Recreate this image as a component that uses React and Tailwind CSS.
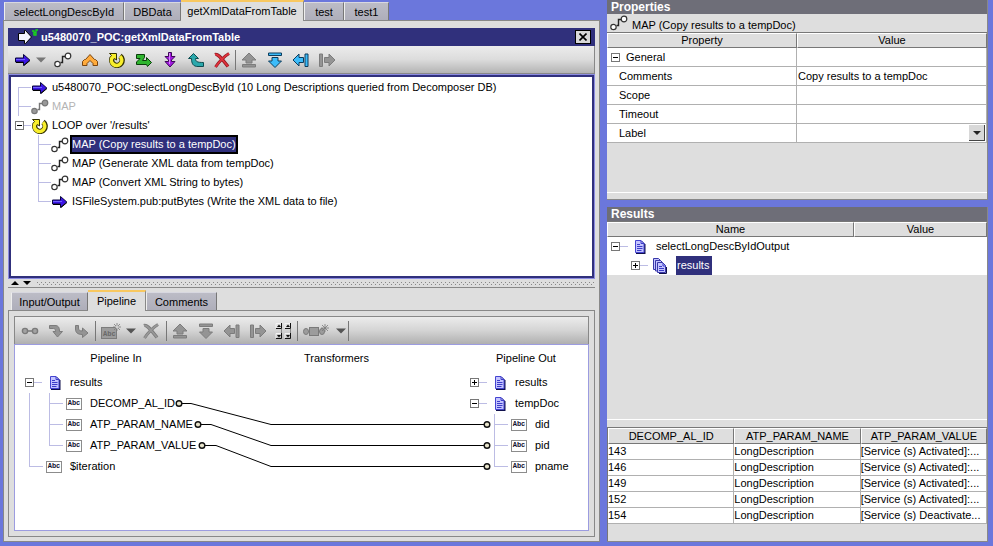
import React from "react";

const FLOW = "#bcbce4";

/* ---------- icons ---------- */

const Svg = ({ w = 18, h = 16, children, label }) => (
  <svg width={w} height={h} viewBox={`0 0 ${w} ${h}`} className="block shrink-0" aria-hidden={label ? undefined : true}>
    {children}
  </svg>
);

const InvokeIcon = () => (
  <Svg>
    <path d="M1.5 6H9.5V2.5L15.8 8L9.5 13.5V10H1.5Z" fill="#3c14e6" stroke="#08063c" />
    <path d="M2 7.5H11" stroke="#7060ff" />
    <path d="M2 10.5H9M10 13.5L16 8.5" stroke="#000" />
  </Svg>
);

const MapIcon = ({ off = false }) => (
  <Svg>
    <path d="M6.5 10.5H8.5V4.5H11" fill="none" stroke={off ? "#777" : "#222"} strokeWidth="1.4" />
    <circle cx="3.5" cy="12" r="2.7" fill={off ? "#999" : "#fff"} stroke={off ? "#777" : "#333"} strokeWidth="1.2" />
    <circle cx="14" cy="4" r="2.8" fill={off ? "#999" : "#fff"} stroke={off ? "#777" : "#333"} strokeWidth="1.2" />
  </Svg>
);

const BranchIcon = () => (
  <Svg>
    <path d="M1.5 13.5V9.5L3.5 7.5H4.5L9 2.5L13.5 7.5H14.5L16.5 9.5V13.5H12V11.5L9 8.5L6 11.5V13.5Z" fill="#ffab3c" stroke="#7a4510" />
  </Svg>
);

const LoopIcon = () => (
  <Svg>
    <path d="M4.5 5.5A5.2 5.2 0 1 0 12 4" fill="none" stroke="#333100" strokeWidth="5.4" />
    <path d="M1.5 1.5H8.5V8L6.5 6.5L4 8L2 6L3.5 3.5Z" fill="#f8ee2c" stroke="#333100" />
    <path d="M4.5 5A5.2 5.2 0 1 0 12 4.3" fill="none" stroke="#f8ee2c" strokeWidth="3.6" />
  </Svg>
);

const RepeatIcon = () => (
  <Svg>
    <path d="M1.5 2.5H9.5V5.5L7.5 8.5H11.5V5.5L16.5 10.5L12.5 14.5L11.5 12.5H1.5V10L5 6.5H1.5Z" fill="#2fb52f" stroke="#0a3d0a" />
  </Svg>
);

const SequenceIcon = () => (
  <Svg>
    <path d="M7.5 .5H10.5V4.5H14L10.5 8V9.5H14L9 15L4 9.5H7.5V8L4 4.5H7.5Z" fill="#a21be0" stroke="#3c0858" />
    <path d="M8.5 1V12" stroke="#d884fa" />
  </Svg>
);

const ExitIcon = () => (
  <Svg>
    <path d="M6.5 1.5L11.5 6.5H8.5C8.5 9.5 10 10.5 16.5 10.5V14.5H11C6 14.5 4.5 11.5 4.5 6.5H1.5Z" fill="#2ba8ac" stroke="#0c4c50" />
  </Svg>
);

const DeleteIcon = ({ off = false }) => (
  <Svg>
    <path d="M2 2.5C5 1.5 8 6 15 14.5" fill="none" stroke={off ? "#787878" : "#8c1820"} strokeWidth="3.4" />
    <path d="M16 1.5C11 4.5 7 8.5 2.5 15" fill="none" stroke={off ? "#787878" : "#8c1820"} strokeWidth="3" />
    <path d="M2 2.5C5 1.5 8 6 15 14.5M16 1.5C11 4.5 7 8.5 2.5 15" fill="none" stroke={off ? "#989898" : "#e0323c"} strokeWidth="1.8" />
  </Svg>
);

const BAR_ARROWS = {
  up: ["M9 1L16 8H12V11H6V8H2Z", "M2.5 12.5H15.5V15H2.5Z"],
  down: ["M6 5.5H12V9H15.5L9 15.5L2.5 9H6Z", "M2.5 1H15.5V3.5H2.5Z"],
  left: ["M1 8L7 2V5.5H11.5V10.5H7V14Z", "M13 2H16V14.5H13Z"],
  right: ["M17 8L11 2V5.5H6.5V10.5H11V14Z", "M1.5 2H4.5V14.5H1.5Z"],
};

const BarArrowIcon = ({ dir, on = false }) => (
  <Svg>
    {BAR_ARROWS[dir].map((d) => (
      <path key={d} d={d} fill={on ? "#3cbcfa" : "#949494"} stroke={on ? "#0c3c5c" : "#7c7c7c"} />
    ))}
  </Svg>
);

const Caret = ({ color = "#555" }) => (
  <Svg w={10} h={6}>
    <path d="M0 0.5H10L5 5.5Z" fill={color} />
  </Svg>
);

const LinkIcon = () => (
  <Svg>
    <path d="M6 8H12" stroke="#787878" strokeWidth="1.5" />
    <circle cx="4" cy="8" r="2.6" fill="#a2a2a2" stroke="#7a7a7a" strokeWidth="1.4" />
    <circle cx="14" cy="8" r="2.6" fill="#a2a2a2" stroke="#7a7a7a" strokeWidth="1.4" />
  </Svg>
);

const CurveDownIcon = () => (
  <Svg>
    <path d="M2.5 2.5H8C11 2.5 12.5 4 12.5 8.5H15.5L10.5 14L6 8.5H8.5C8.5 6.5 8 5.5 6.5 5.5H2.5Z" fill="#949494" stroke="#7c7c7c" />
  </Svg>
);

const CurveRightIcon = () => (
  <Svg>
    <path d="M2.5 2.5H5.5V5C5.5 7 6.5 8 9.5 8V5L15 10L9.5 14.5V11.5C4.5 11.5 2.5 9.5 2.5 6Z" fill="#949494" stroke="#7c7c7c" />
  </Svg>
);

const Spark = ({ x, y }) => (
  <path
    d={`M${x} ${y - 4}V${y + 4}M${x - 4} ${y}H${x + 4}M${x - 3} ${y - 3}L${x + 3} ${y + 3}M${x + 3} ${y - 3}L${x - 3} ${y + 3}`}
    stroke="#7a7a7a"
    strokeWidth=".8"
  />
);

const NewValueIcon = () => (
  <Svg w={22} h={18}>
    <rect x="1.5" y="5.5" width="15" height="11" fill="#9c9c9c" stroke="#7c7c7c" />
    <text x="3" y="14" className="font-[Liberation_Mono] text-[7px] font-bold" fill="#686868">Abc</text>
    <Spark x={17} y={5} />
    <circle cx="17" cy="5" r="1.5" fill="#d0d0d0" />
  </Svg>
);

const TransformerIcon = () => (
  <Svg w={28} h={16}>
    <path d="M5 8.5H22" stroke="#787878" />
    <ellipse cx="4" cy="8.5" rx="2.5" ry="3" fill="#9c9c9c" stroke="#7a7a7a" />
    <rect x="7.5" y="4.5" width="9" height="8" fill="#9c9c9c" stroke="#7a7a7a" />
    <ellipse cx="20" cy="8.5" rx="2.5" ry="3" fill="#9c9c9c" stroke="#7a7a7a" />
    <Spark x={23} y={5} />
  </Svg>
);

const SpinnerGridIcon = () => (
  <Svg>
    {[1, 10].map((x) =>
      [0, 10].map((y) => (
        <g key={`${x}-${y}`}>
          <path d={`M${x} ${y + 5.5}H${x + 5.5}V${y}`} fill="none" stroke="#111" />
          <path d={`M${x} ${y + 5}V${y + 0.5}H${x + 5}`} fill="none" stroke="#f4f4f4" />
          <path d={y ? `M${x + 1} 12H${x + 5}L${x + 3} 14.5Z` : `M${x + 1} 4H${x + 5}L${x + 3} 1.5Z`} fill="#111" />
        </g>
      ))
    )}
    <path d="M6.5 6V10M15.5 6V10" stroke="#888" />
  </Svg>
);

const DocIcon = () => (
  <Svg w={12} h={14}>
    <path d="M2 1H8L11.5 4.5V14H2Z" fill="#10104c" />
    <path d="M1.5 .5H7L10 3.5V12.5H1.5Z" fill="#c4c4ff" stroke="#4444d0" />
    <path d="M7 .5V3.5H10M3 4.5H6M3 6.5H8.5M3 8.5H8.5M3 10.5H7.5" fill="none" stroke="#3c3cc8" />
  </Svg>
);

const DocListIcon = () => (
  <Svg w={16} h={16}>
    {[0, 2, 4].map((o) => (
      <path key={o} d={`M${0.5 + o} ${0.5 + o}H${5.5 + o}L${8.5 + o} ${3.5 + o}V${11.5 + (o * 3) / 4}H${0.5 + o}Z`} fill="#c4c4ff" stroke="#3838a8" />
    ))}
    <path d="M6 8.5H9M6 10.5H11M6 12.5H11M10 5V8H13" fill="none" stroke="#3c3cc8" />
    <path d="M6 15.5H13.5V9" fill="none" stroke="#10104c" />
  </Svg>
);

const AbcIcon = () => (
  <span className="flex h-3 w-4 shrink-0 items-center justify-center border border-[#8c8c8c] bg-white font-['Liberation_Mono',monospace] text-[7px] leading-none font-bold text-[#101030]">
    Abc
  </span>
);

/* ---------- shared parts ---------- */

const Tool = ({ label, children, width = "w-[26px]" }) => (
  <button type="button" aria-label={label} className={`flex h-6 shrink-0 items-center justify-center ${width}`}>
    {children}
  </button>
);

const Sep = () => <span className="h-[20px] w-px shrink-0 bg-[#777]" />;

const Toggle = ({ open, label }) => (
  <button type="button" aria-label={label} aria-expanded={open} className="block size-[9px] shrink-0 border border-[#777] bg-white">
    <svg width="7" height="7" viewBox="0 0 7 7" className="block" shapeRendering="crispEdges">
      <path d={open ? "M1 3.5H6" : "M1 3.5H6M3.5 1V6"} stroke="#000" />
    </svg>
  </button>
);

const Tab = ({ children, active = false, width }) => (
  <button
    type="button"
    role="tab"
    aria-selected={active}
    className={
      (active
        ? "relative z-10 -mb-px h-[21px] border-t-2 border-t-[#f8c860] border-r border-r-[#888] bg-[#dedede] pb-px "
        : "h-[18px] border-t border-l border-t-[#d8d8e0] border-l-[#eee] border-r border-r-[#777] bg-linear-to-b from-[#bcbcc6] to-[#aeaeba] ") +
      "shrink-0 text-center whitespace-nowrap leading-4 " +
      width
    }
  >
    {children}
  </button>
);

const Guide = ({ w, h = 19, d }) => (
  <svg width={w} height={h} viewBox={`0 0 ${w} ${h}`} className="block shrink-0" shapeRendering="crispEdges" aria-hidden="true">
    <path d={d} fill="none" stroke={FLOW} />
  </svg>
);

/* ---------- service flow ---------- */

const CHILD = "M27.5 0V19M27.5 9.5H42";
const CHILD_LAST = "M27.5 0V9.5H42";

const STEPS = [
  { guide: [20, "M7.5 9V19M7.5 9.5H22"], icon: <InvokeIcon />, text: "u5480070_POC:selectLongDescById (10 Long Descriptions queried from Decomposer DB)" },
  { guide: [20, "M7.5 0V19M7.5 9.5H20"], icon: <MapIcon off />, text: "MAP", off: true },
  { loop: true, icon: <LoopIcon />, text: "LOOP over '/results'" },
  { guide: [40, CHILD], icon: <MapIcon />, text: "MAP (Copy results to a tempDoc)", selected: true },
  { guide: [40, CHILD], icon: <MapIcon />, text: "MAP (Generate XML data from tempDoc)" },
  { guide: [40, CHILD], icon: <MapIcon />, text: "MAP (Convert XML String to bytes)" },
  { guide: [40, CHILD_LAST], icon: <InvokeIcon />, text: "ISFileSystem.pub:putBytes (Write the XML data to file)" },
];

const Step = ({ guide, loop, icon, text, off, selected }) => (
  <li className="flex h-[19px] items-center">
    {loop ? (
      <span className="flex w-5 shrink-0 items-center pl-1">
        <Toggle open label="Collapse loop" />
        <span className="h-px flex-1 bg-[#bcbce4]" />
      </span>
    ) : (
      <Guide w={guide[0]} d={guide[1]} />
    )}
    {icon}
    <span
      className={
        "ml-px border-2 whitespace-nowrap leading-[15px] " +
        (selected ? "border-black bg-[#30307c] text-white" : off ? "border-transparent text-[#b4b4b4]" : "border-transparent")
      }
    >
      {text}
    </span>
  </li>
);

function ServiceEditor() {
  return (
    <section className="flex grow-[251] basis-0 flex-col">
      <header className="flex h-[18px] items-center bg-[#30307c] pr-1 pl-2 text-white">
        <svg width="24" height="18" viewBox="0 0 24 18" className="block shrink-0" aria-hidden="true">
          <path d="M2.5 5.5H8.5V2.5H9.5L15.5 9L9.5 15.5H8.5V12.5H2.5Z" fill="#f4f4ff" stroke="#000" />
          <path d="M16 3H18V7H20V2H22M17 6L20 4" fill="none" stroke="#18d818" strokeWidth="1.3" />
        </svg>
        <h1 className="ml-px flex-1 leading-4 font-bold whitespace-nowrap">u5480070_POC:getXmlDataFromTable</h1>
        <button type="button" aria-label="Close" className="flex h-[14px] w-4 items-center justify-center border border-black bg-[#d8d8d8]">
          <svg width="8" height="8" viewBox="0 0 8 8">
            <path d="M.5 .5L7.5 7.5M7.5 .5L.5 7.5" stroke="#000" strokeWidth="1.6" />
          </svg>
        </button>
      </header>
      <div className="flex h-7 items-center border-r border-b border-[#888] bg-linear-to-b from-[#ececec] via-[#dcdcdc] to-[#b4b4b4] pl-1.5">
        <Tool label="Invoke" width="w-[18px]"><InvokeIcon /></Tool>
        <Tool label="Invoke options" width="w-[17px]"><Caret color="#777" /></Tool>
        <span className="flex gap-px pr-px pl-px">
          <Tool label="Map"><MapIcon /></Tool>
          <Tool label="Branch"><BranchIcon /></Tool>
          <Tool label="Loop"><LoopIcon /></Tool>
          <Tool label="Repeat"><RepeatIcon /></Tool>
          <Tool label="Sequence" width="w-[24px]"><SequenceIcon /></Tool>
          <Tool label="Exit"><ExitIcon /></Tool>
          <Tool label="Delete" width="w-[24px]"><DeleteIcon /></Tool>
        </span>
        <Sep />
        <Tool label="Move up"><BarArrowIcon dir="up" /></Tool>
        <Tool label="Move down"><BarArrowIcon dir="down" on /></Tool>
        <Tool label="Move left"><BarArrowIcon dir="left" on /></Tool>
        <Tool label="Move right"><BarArrowIcon dir="right" /></Tool>
      </div>
      <div className="flex-1 border border-[#8c8ce0]">
        <ul className="h-full border-2 border-[#30307c] bg-white pt-px">
          {STEPS.map((s) => (
            <Step key={s.text} {...s} />
          ))}
        </ul>
      </div>
    </section>
  );
}

/* ---------- pipeline ---------- */

const Node = ({ guide, toggle, icon, text }) => (
  <li className="flex h-[21px] items-center">
    {guide && <Guide w={guide[0]} h={21} d={guide[1]} />}
    {toggle && (
      <span className="flex w-[34px] shrink-0 items-center pl-[10px]">
        <Toggle open={toggle === "open"} label={`Toggle ${text}`} />
        <span className="h-px w-2 bg-[#bcbce4]" />
      </span>
    )}
    {icon}
    <span className="ml-2 whitespace-nowrap">{text}</span>
  </li>
);

const docIn = <span className="flex w-[13px] shrink-0"><DocIcon /></span>;

const LINKS = [
  { y: 59, from: 164, bend: [176, 256] },
  { y: 80, from: 183, bend: [196, 256] },
  { y: 101, from: 187, bend: [201, 256] },
];

const Dot = ({ cx, cy }) => <circle cx={cx} cy={cy} r="2.8" fill="#e8e4cc" stroke="#111" strokeWidth="1.4" />;

function Pipeline() {
  return (
    <div className="relative flex-1 border border-[#9c9ce0] bg-white">
      <div className="grid h-[27px] grid-cols-[202fr_239fr_132fr] items-center text-center">
        <h2>Pipeline In</h2>
        <h2>Transformers</h2>
        <h2 className="pl-10 text-left">Pipeline Out</h2>
      </div>
      <div className="flex justify-between">
        <ul>
          <Node toggle="open" icon={docIn} text="results" />
          <Node guide={[51, "M14.5 0V21M34.5 0V21M34.5 10.5H48"]} icon={<AbcIcon />} text="DECOMP_AL_ID" />
          <Node guide={[51, "M14.5 0V21M34.5 0V21M34.5 10.5H48"]} icon={<AbcIcon />} text="ATP_PARAM_NAME" />
          <Node guide={[51, "M14.5 0V21M34.5 0V10.5H48"]} icon={<AbcIcon />} text="ATP_PARAM_VALUE" />
          <Node guide={[31, "M14.5 0V10.5H28"]} icon={<AbcIcon />} text="$iteration" />
        </ul>
        <ul className="w-[128px]">
          <Node toggle="closed" icon={docIn} text="results" />
          <Node toggle="open" icon={docIn} text="tempDoc" />
          <Node guide={[51, "M34.5 0V21M34.5 10.5H48"]} icon={<AbcIcon />} text="did" />
          <Node guide={[51, "M34.5 0V21M34.5 10.5H48"]} icon={<AbcIcon />} text="pid" />
          <Node guide={[51, "M34.5 0V10.5H48"]} icon={<AbcIcon />} text="pname" />
        </ul>
      </div>
      <div className="pointer-events-none absolute top-0 right-[101px] left-0">
        <svg width="100%" height="130" className="block overflow-visible" aria-hidden="true">
          {LINKS.map(({ y, from, bend }) => (
            <g key={y}>
              <path d={`M${from} ${y - 0.5}H${bend[0]}L${bend[1]} ${y + 20.5}`} fill="none" stroke="#000" />
              <line x1={bend[1]} x2="100%" y1={y + 20.5} y2={y + 20.5} stroke="#000" />
              <Dot cx={from} cy={y - 0.5} />
              <Dot cx="100%" cy={y + 20.5} />
            </g>
          ))}
        </svg>
      </div>
    </div>
  );
}

function PipelineEditor() {
  return (
    <section className="flex grow-[248] basis-0 flex-col">
      <div className="flex h-[21px] items-end pl-[3px]" role="tablist">
        <Tab width="w-[77px]">Input/Output</Tab>
        <Tab active width="w-[58px]">Pipeline</Tab>
        <Tab width="w-[71px]">Comments</Tab>
      </div>
      <div className="flex flex-1 flex-col border border-[#888] p-[5px]">
        <div className="flex h-7 items-center border border-b-0 border-[#888] bg-linear-to-b from-[#ececec] via-[#d4d4d4] to-[#b0b0b0] pl-0.5">
          <Tool label="Link"><LinkIcon /></Tool>
          <Tool label="Step over"><CurveDownIcon /></Tool>
          <Tool label="Step into"><CurveRightIcon /></Tool>
          <Sep />
          <Tool label="Set value" width="w-[30px]"><NewValueIcon /></Tool>
          <Tool label="Value options" width="w-[10px]"><Caret /></Tool>
          <Tool label="Drop" width="w-[30px]"><DeleteIcon off /></Tool>
          <Sep />
          <Tool label="Shift up"><BarArrowIcon dir="up" /></Tool>
          <Tool label="Shift down"><BarArrowIcon dir="down" /></Tool>
          <Tool label="Shift left"><BarArrowIcon dir="left" /></Tool>
          <Tool label="Shift right"><BarArrowIcon dir="right" /></Tool>
          <Tool label="Dimensions"><SpinnerGridIcon /></Tool>
          <Sep />
          <Tool label="Add transformer" width="w-9"><TransformerIcon /></Tool>
          <Tool label="Transformer options" width="w-[14px]"><Caret /></Tool>
          <Sep />
        </div>
        <Pipeline />
      </div>
    </section>
  );
}

/* ---------- right-hand panels ---------- */

const PanelTitle = ({ children }) => (
  <h2 className="bg-[#6e6e78] pl-1 text-[12px] leading-[14px] font-bold text-white">{children}</h2>
);

const Th = ({ children, h = "h-[15px]", width = "" }) => (
  <th scope="col" className={`border-t border-l border-t-white border-l-white border-r border-b border-r-[#777] border-b-[#777] bg-[#dedede] p-0 text-center leading-[13px] font-normal ${h} ${width}`}>
    {children}
  </th>
);

const FIELDS = [
  ["comments", "Comments", "Copy results to a tempDoc"],
  ["scope", "Scope", ""],
  ["timeout", "Timeout", ""],
];

const CELL = "h-[19px] border-r border-b border-[#b0b0b0] p-0";

function Properties() {
  return (
    <section className="flex grow-[200] basis-0 flex-col border-r border-b border-[#888] bg-[#dedede]">
      <PanelTitle>Properties</PanelTitle>
      <p className="flex h-[18px] items-center pl-[3px]">
        <MapIcon />
        <span className="ml-1 pt-1 leading-[14px]">MAP (Copy results to a tempDoc)</span>
      </p>
      <table className="w-full table-fixed border-separate border-spacing-0 border-t border-[#777]">
        <thead>
          <tr>
            <Th>Property</Th>
            <Th>Value</Th>
          </tr>
        </thead>
        <tbody className="bg-white">
          <tr>
            <td className={CELL}>
              <span className="flex items-center gap-1.5 pl-1">
                <Toggle open label="Collapse General" />
                General
              </span>
            </td>
            <td className={CELL} />
          </tr>
          {FIELDS.map(([id, name, value]) => (
            <tr key={id}>
              <td className={CELL}>
                <label htmlFor={id} className="pl-3">{name}</label>
              </td>
              <td className={CELL}>
                <input id={id} defaultValue={value} className="block h-[18px] w-full bg-transparent pl-px outline-none" />
              </td>
            </tr>
          ))}
          <tr>
            <td className={CELL}>
              <label htmlFor="label" className="pl-3">Label</label>
            </td>
            <td className={CELL}>
              <div className="relative">
                <select id="label" defaultValue="" className="block h-[18px] w-full appearance-none bg-transparent outline-none">
                  <option value=""></option>
                </select>
                <span className="pointer-events-none absolute top-px right-px flex h-4 w-4 items-center justify-center border-r border-b border-[#444] bg-[#d8d8d8]">
                  <svg width="8" height="4" viewBox="0 0 8 4"><path d="M0 0H8L4 4Z" fill="#222" /></svg>
                </span>
              </div>
            </td>
          </tr>
        </tbody>
      </table>
      <div className="mt-auto h-[7px] border-t border-white" />
    </section>
  );
}

const RECORDS = [
  ["143", "LongDescription", "[Service (s) Activated]:..."],
  ["146", "LongDescription", "[Service (s) Activated]:..."],
  ["149", "LongDescription", "[Service (s) Activated]:..."],
  ["152", "LongDescription", "[Service (s) Activated]:..."],
  ["154", "LongDescription", "[Service (s) Deactivate..."],
];

function Results() {
  return (
    <section className="flex grow-[335] basis-0 flex-col border-r border-b border-[#888] bg-[#dedede]">
      <PanelTitle>Results</PanelTitle>
      <table className="w-full table-fixed border-separate border-spacing-0 border-t border-[#777]">
        <thead>
          <tr>
            <Th width="w-[65%]">Name</Th>
            <Th>Value</Th>
          </tr>
        </thead>
        <tbody className="bg-white">
          <tr>
            <td className="h-[19px] p-0">
              <span className="flex items-center pl-1">
                <Toggle open label="Collapse selectLongDescByIdOutput" />
                <span className="mr-1.5 h-px w-2 bg-[#bcbce4]" />
                <DocIcon />
                <span className="ml-[10px]">selectLongDescByIdOutput</span>
              </span>
            </td>
            <td className="p-0" />
          </tr>
          <tr>
            <td className="h-[19px] p-0">
              <span className="flex items-center pl-6">
                <Toggle open={false} label="Expand results" />
                <span className="mr-[5px] h-px w-2 bg-[#bcbce4]" />
                <DocListIcon />
                <span className="ml-[7px] bg-[#30307c] px-px pr-[3px] leading-[19px] text-white">results</span>
              </span>
            </td>
            <td className="p-0" />
          </tr>
        </tbody>
      </table>
      <div className="mt-auto h-2 border-t border-white" />
      <div className="border-t border-l border-[#777] pb-[17px]">
        <table className="w-full table-fixed border-separate border-spacing-0">
          <thead>
            <tr>
              <Th h="h-4">DECOMP_AL_ID</Th>
              <Th h="h-4">ATP_PARAM_NAME</Th>
              <Th h="h-4">ATP_PARAM_VALUE</Th>
            </tr>
          </thead>
          <tbody className="bg-white">
            {RECORDS.map((r) => (
              <tr key={r[0]}>
                {r.map((c, i) => (
                  <td key={i} className="h-4 border-r border-b border-[#b0b0b0] p-0 leading-[15px] whitespace-nowrap">
                    {c}
                  </td>
                ))}
              </tr>
            ))}
          </tbody>
        </table>
      </div>
    </section>
  );
}

export default function App() {
  return (
    <div className="grid min-h-screen grid-cols-[597fr_381fr] gap-[7px] bg-[#6b77dc] pr-[5px] pb-1 pl-[3px] font-['Liberation_Sans',Arial,sans-serif] text-[11px] leading-[15px] text-black">
      <main className="flex min-w-0 flex-col">
        <div className="flex h-5 items-end pl-px" role="tablist">
          <Tab width="w-[120px]">selectLongDescById</Tab>
          <Tab width="w-[57px]">DBData</Tab>
          <Tab active width="w-[123px]">getXmlDataFromTable</Tab>
          <Tab width="w-[40px]">test</Tab>
          <Tab width="w-[45px]">test1</Tab>
        </div>
        <div className="flex flex-1 flex-col border border-[#888] bg-[#dedede] px-1 pt-[7px] pb-1">
          <ServiceEditor />
          <div className="mb-px flex h-[9px] items-center gap-[3px] border-b border-[#888] pl-[3px]">
            <svg width="20" height="4" viewBox="0 0 20 4" className="shrink-0" aria-hidden="true">
              <path d="M0 4L4 0L8 4ZM12 0H20L16 4Z" fill="#000" />
            </svg>
            <svg width="100%" height="4" className="min-w-0 flex-1" shapeRendering="crispEdges" aria-hidden="true">
              <line x1="3" x2="100%" y1="1.5" y2="1.5" stroke="#888" strokeDasharray="1 3" />
              <line x1="5" x2="100%" y1="3.5" y2="3.5" stroke="#888" strokeDasharray="1 3" />
            </svg>
          </div>
          <PipelineEditor />
        </div>
      </main>
      <aside className="flex min-w-0 flex-col gap-[7px]">
        <Properties />
        <Results />
      </aside>
    </div>
  );
}
